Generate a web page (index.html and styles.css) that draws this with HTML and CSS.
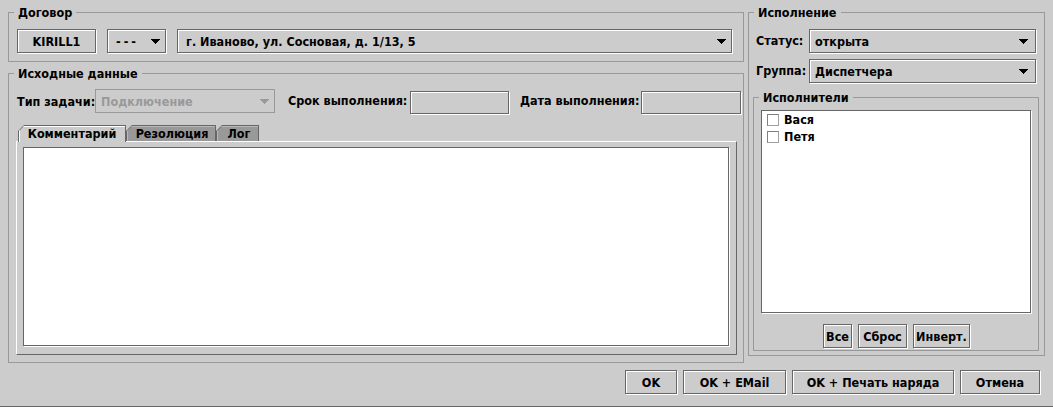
FILE: index.html
```html
<!DOCTYPE html>
<html lang="ru">
<head>
<meta charset="utf-8">
<title>Наряд</title>
<link rel="stylesheet" href="styles.css">
</head>
<body>
<div class="window">
  <div class="main">
    <div class="left">
      <fieldset class="group contract">
        <legend>Договор</legend>
        <div class="contract-row">
          <div class="btn btn-kirill">KIRILL1</div>
          <div class="combo combo-dash"><span class="combo-text dashes">---</span><svg class="arrow" width="9" height="5" viewBox="0 0 9 5"><path d="M0 0h9v1H0zM1 1h7v1H1zM2 2h5v1H2zM3 3h3v1H3zM4 4h1v1H4z"/></svg></div>
          <div class="combo combo-addr"><span class="combo-text">г. Иваново, ул. Сосновая, д. 1/13, 5</span><svg class="arrow" width="9" height="5" viewBox="0 0 9 5"><path d="M0 0h9v1H0zM1 1h7v1H1zM2 2h5v1H2zM3 3h3v1H3zM4 4h1v1H4z"/></svg></div>
        </div>
      </fieldset>
      <fieldset class="group source">
        <legend>Исходные данные</legend>
        <div class="params-row">
          <span class="lbl lbl-type">Тип задачи:</span>
          <div class="combo combo-type disabled"><span class="combo-text">Подключение</span><svg class="arrow" width="9" height="5" viewBox="0 0 9 5"><path d="M0 0h9v1H0zM1 1h7v1H1zM2 2h5v1H2zM3 3h3v1H3zM4 4h1v1H4z"/></svg></div>
          <span class="lbl lbl-term">Срок выполнения:</span>
          <div class="field field-term"></div>
          <span class="lbl lbl-date">Дата выполнения:</span>
          <div class="field field-date"></div>
        </div>
        <div class="tabpane">
          <div class="tabstrip">
            <div class="tab tab-active tab-1"><div class="tab-face">Комментарий</div></div>
            <div class="tab tab-2"><div class="tab-face">Резолюция</div></div>
            <div class="tab tab-3"><div class="tab-face">Лог</div></div>
          </div>
          <div class="tabcontent">
            <div class="textarea"></div>
          </div>
        </div>
      </fieldset>
    </div>
    <div class="right">
      <fieldset class="group exec">
        <legend>Исполнение</legend>
        <div class="exec-row exec-row-first">
          <span class="lbl lbl-exec">Статус:</span>
          <div class="combo combo-exec"><span class="combo-text">открыта</span><svg class="arrow" width="9" height="5" viewBox="0 0 9 5"><path d="M0 0h9v1H0zM1 1h7v1H1zM2 2h5v1H2zM3 3h3v1H3zM4 4h1v1H4z"/></svg></div>
        </div>
        <div class="exec-row">
          <span class="lbl lbl-exec">Группа:</span>
          <div class="combo combo-exec"><span class="combo-text">Диспетчера</span><svg class="arrow" width="9" height="5" viewBox="0 0 9 5"><path d="M0 0h9v1H0zM1 1h7v1H1zM2 2h5v1H2zM3 3h3v1H3zM4 4h1v1H4z"/></svg></div>
        </div>
        <fieldset class="group performers">
          <legend>Исполнители</legend>
          <div class="list">
            <div class="list-item"><span class="check"></span><span>Вася</span></div>
            <div class="list-item"><span class="check"></span><span>Петя</span></div>
          </div>
          <div class="list-buttons">
            <div class="btn btn-all">Все</div>
            <div class="btn btn-reset">Сброс</div>
            <div class="btn btn-invert">Инверт.</div>
          </div>
        </fieldset>
      </fieldset>
    </div>
  </div>
  <div class="actions">
    <div class="btn btn-ok">OK</div>
    <div class="btn btn-email">OK + EMail</div>
    <div class="btn btn-print">OK + Печать наряда</div>
    <div class="btn btn-cancel">Отмена</div>
  </div>
</div>
</body>
</html>
```

FILE: styles.css
```css
* {
  box-sizing: border-box;
}

html, body {
  margin: 0;
  padding: 0;
}

body {
  background: #cccccc;
  font-family: "DejaVu Sans Condensed", "DejaVu Sans", sans-serif;
  font-stretch: condensed;
  font-weight: bold;
  font-size: 12.5px;
  color: #000;
  overflow: hidden;
}

.window {
  width: 1053px;
  height: 407px;
  border-bottom: 1px solid #666666;
  display: flex;
  flex-direction: column;
}

.main {
  display: flex;
  gap: 4px;
  padding: 5px 8px 0 8px;
  align-items: flex-start;
}

.left {
  width: 736px;
  display: flex;
  flex-direction: column;
}

.right {
  width: 297px;
}

/* titled borders */
.group {
  margin: 0;
  padding: 0;
  border: 1px solid #999999;
  min-width: 0;
}

.group > legend {
  margin-left: 5px;
  padding: 0 4px;
  height: 15px;
  line-height: 15px;
  font-size: 12.5px;
}

/* 3D metal controls */
.btn,
.combo,
.field {
  height: 24px;
  border: 1px solid #666666;
  box-shadow: 1px 1px 0 #ffffff, inset 1px 1px 0 #ffffff;
  background: #cccccc;
}

.btn {
  display: flex;
  align-items: center;
  justify-content: center;
  white-space: nowrap;
}

.combo {
  display: flex;
  align-items: center;
  padding-left: 8px;
  padding-right: 5px;
}

.combo-text {
  flex: 1;
  white-space: nowrap;
  overflow: hidden;
}

.dashes {
  letter-spacing: 3px;
}

.arrow {
  display: block;
  flex: none;
  fill: #000;
  shape-rendering: crispEdges;
}

.combo.disabled {
  border-color: #999999;
  box-shadow: none;
  color: #999999;
  padding-left: 5px;
}

.combo.disabled .arrow {
  fill: #999999;
}

/* Договор */
.contract-row {
  display: flex;
  gap: 11px;
  padding: 9px 11px 8px 8px;
}

.btn-kirill {
  width: 79px;
}

.combo-dash {
  width: 59px;
}

.combo-addr {
  flex: 1;
}

/* Исходные данные */
.group.source {
  margin-top: 4px;
}

.params-row {
  display: flex;
  align-items: flex-start;
  padding: 8px 0 0 8px;
}

.lbl {
  white-space: nowrap;
  line-height: 24px;
  display: block;
}

.lbl-type {
  width: 78px;
  line-height: 25px;
}

.combo-type {
  width: 180px;
}

.lbl-term {
  margin-left: 13px;
  width: 122px;
}

.field {
  margin-top: 2px;
  height: 23px;
}

.field-term {
  width: 99px;
}

.lbl-date {
  margin-left: 11px;
  width: 121px;
}

.field-date {
  width: 100px;
}

.tabpane {
  margin: 11px 6px 7px 7px;
}

.tabstrip {
  display: flex;
  height: 16px;
  padding-left: 2px;
  position: relative;
  z-index: 1;
}

.tab {
  height: 16px;
  background: #666666;
  clip-path: polygon(6px 0, 100% 0, 100% 100%, 0 100%, 0 6px);
  padding: 1px 1px 0 1px;
}

.tab-face {
  height: 100%;
  background: #999999;
  clip-path: polygon(5px 0, 100% 0, 100% 100%, 0 100%, 0 5px);
  text-align: center;
  line-height: 15px;
  white-space: nowrap;
  box-shadow: inset 1px 1px 0 #b8b8b8;
}

.tab-active {
  height: 17px;
}

.tab-active .tab-face {
  background: #cccccc;
  box-shadow: inset 1px 1px 0 #ffffff;
}

.tab-1 {
  width: 108px;
}

.tab-2 {
  width: 90px;
}

.tab-2 .tab-face {
  padding-left: 2px;
}

.tab-3 {
  width: 43px;
}

.tab-3 .tab-face {
  padding-left: 3px;
}

.tabcontent {
  height: 214px;
  border-top: 1px solid #ffffff;
  border-left: 1px solid #ffffff;
  border-right: 1px solid #666666;
  border-bottom: 1px solid #666666;
  padding: 5px 7px 7px 6px;
}

.textarea {
  height: 199px;
  background: #ffffff;
  border: 1px solid #666666;
  box-shadow: 1px 1px 0 #ffffff;
}

/* Исполнение */
.group.exec {
  padding-bottom: 4px;
}

.exec-row {
  display: flex;
  margin: 6px 8px 0 7px;
}

.exec-row-first {
  margin-top: 9px;
}

.lbl-exec {
  width: 53px;
}

.combo-exec {
  flex: 1;
  padding-left: 5px;
  padding-right: 7px;
}

.group.performers {
  margin: 7px 5px 0 4px;
  padding: 5px 7px 2px 7px;
}

.group.performers > legend {
  margin-left: -2px;
}

.list {
  height: 203px;
  background: #ffffff;
  border: 1px solid #666666;
  box-shadow: 1px 1px 0 #ffffff;
  padding: 0 0 0 5px;
}

.list-item {
  display: flex;
  align-items: center;
  height: 17px;
  gap: 5px;
}

.check {
  width: 12px;
  height: 12px;
  border: 1px solid #808080;
  border-right-color: #a0a0a0;
  border-bottom-color: #a0a0a0;
  background: #ffffff;
  flex: none;
}

.list-buttons {
  display: flex;
  justify-content: center;
  gap: 6px;
  margin-top: 11px;
  padding-left: 1px;
}

.btn-all {
  width: 29px;
}

.btn-reset {
  width: 49px;
}

.btn-invert {
  width: 57px;
}

/* bottom actions */
.actions {
  display: flex;
  justify-content: flex-end;
  gap: 6px;
  padding: 0 13px 0 0;
  margin-top: 7px;
}

.btn-ok {
  width: 52px;
}

.btn-email {
  width: 103px;
}

.btn-print {
  width: 162px;
}

.btn-cancel {
  width: 80px;
}
```
